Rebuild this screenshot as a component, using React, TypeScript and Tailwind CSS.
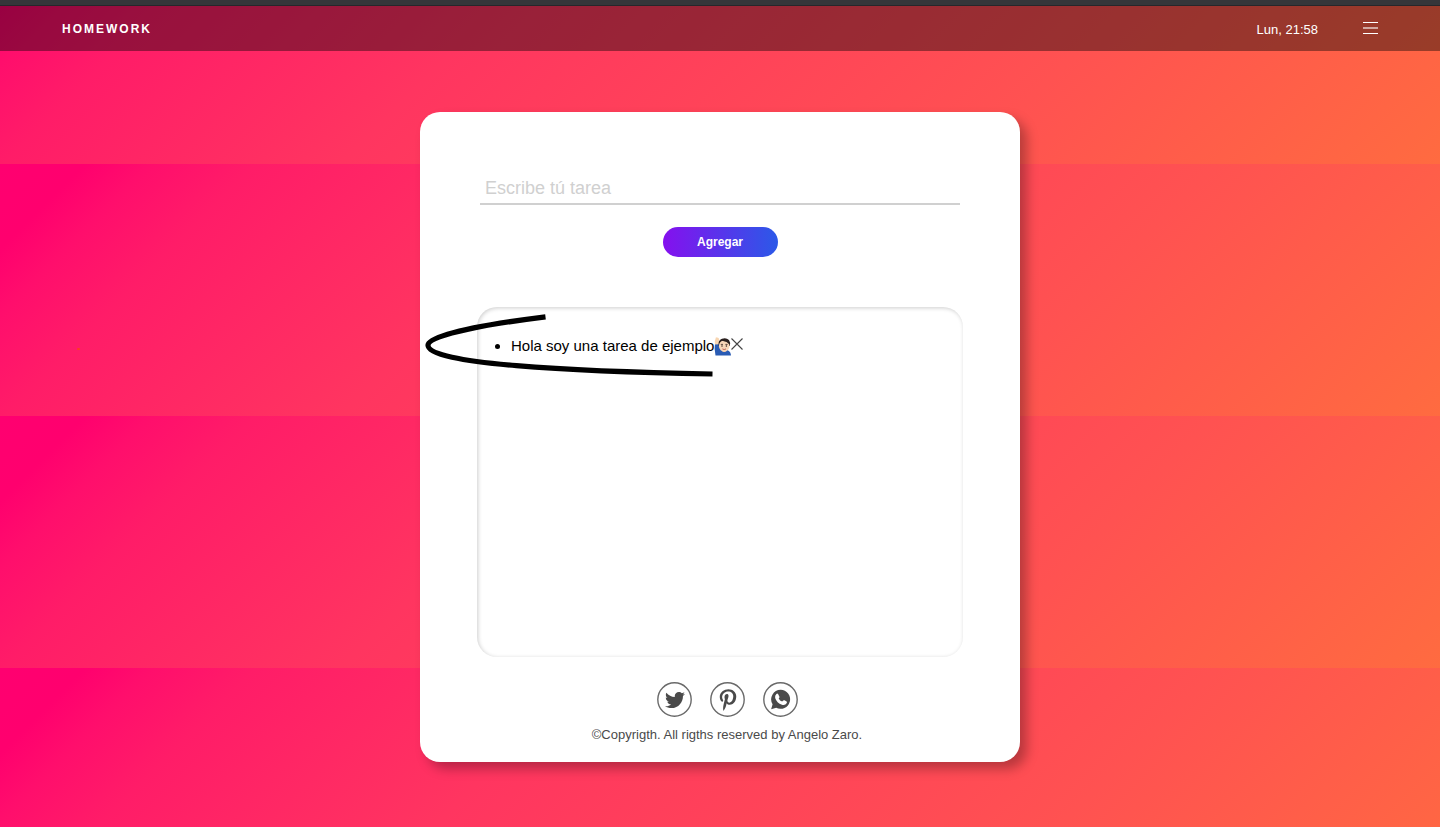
import { useState } from "react";
import type { ReactNode } from "react";
import { FaPinterestP, FaTwitter } from "react-icons/fa";

function MenuIcon() {
  return (
    <svg width="15" height="12" viewBox="0 0 15 12" aria-hidden="true">
      <path d="M0 0.5H15M0 11.5H15" stroke="#fff" strokeWidth="1" />
      <path d="M0 6H15" stroke="#fff" strokeOpacity="0.75" strokeWidth="1.5" />
    </svg>
  );
}

function RaisingHandIcon() {
  return (
    <svg width="18" height="19" viewBox="0 0 18 19" role="img" aria-label="Persona levantando la mano">
      <path d="M1 7 L6 6.5 L6 12 Q13 11.5 16 15 Q17 17 17 18.500 H1.5 Q0 12 1 7Z" fill="#2a5cb4" />
      <path d="M1 7.5 Q0 4 1.5 2 L1.8 0.6 Q2.5 0 3 0.8 Q4 0 4.4 1 Q5.6 1.6 5.2 3.6 L5 7.2Z" fill="#f8d5b0" />
      <path d="M8 11 H12.5 V14 Q10 16 8 14Z" fill="#e9bd98" />
      <path d="M4.6 9 Q3.8 3 8 1.8 Q12 0.2 15 3 Q16.6 5 15.8 9Z" fill="#2b211f" />
      <ellipse cx="10.2" cy="9" rx="5.3" ry="5.7" fill="#f8d7b8" />
      <path d="M5.2 7 Q5.6 3.2 9 4 Q13 4.4 15.3 7.2 Q15.6 2.2 10.4 2 Q4.8 2 5.2 7Z" fill="#2b211f" />
      <path d="M6.8 7.4 H9 M11.4 7.4 H13.6" stroke="#3a2a24" strokeWidth="0.8" />
      <circle cx="8" cy="8.9" r="0.75" fill="#35241f" />
      <circle cx="12.4" cy="8.9" r="0.75" fill="#35241f" />
      <path d="M8.4 11.9 Q10.2 13.2 12 11.9" stroke="#b5574d" strokeWidth="0.9" fill="none" />
    </svg>
  );
}

function CloseIcon() {
  return (
    <svg width="12" height="12" viewBox="0 0 12 12" aria-hidden="true">
      <path d="M0.5 0.5L11.5 11.5M11.5 0.5L0.5 11.5" stroke="#444" strokeWidth="1.1" />
    </svg>
  );
}

function WhatsappIcon() {
  return (
    <svg x="7" y="7" width="21" height="21" viewBox="0 0 22 22">
      <path
        d="M11.2 0.8A10 10 0 1 1 6.5 19.7L1.2 21.2L2.7 16A10 10 0 0 1 11.2 0.8Z"
        fill="#4a4a4a"
      />
      <path
        d="M6.7 5.2Q7.7 4.3 8.6 5.5L9.9 8Q10.1 8.9 9.1 9.9Q10.300 12.200 12.700 13.200L13.900 12Q14.5 11.500 15.200 11.900L17.400 13.100Q18 13.6 17.6 14.7Q16 17.6 12.5 16.6Q7.1 14.8 5.4 9.5Q4.900 6.800 6.7 5.2Z"
        fill="#fff"
      />
    </svg>
  );
}

function Badge({ children }: { children: ReactNode }) {
  return (
    <svg width="35" height="35" viewBox="0 0 35 35" aria-hidden="true">
      <circle cx="17.5" cy="17.5" r="16.7" fill="none" stroke="#6a6a6a" strokeWidth="1.4" />
      {children}
    </svg>
  );
}

const socials = [
  { name: "Twitter", href: "#twitter", icon: <FaTwitter size={20} x={8} y={8} /> },
  { name: "Pinterest", href: "#pinterest", icon: <FaPinterestP size={22} x={7} y={7} /> },
  { name: "WhatsApp", href: "#whatsapp", icon: <WhatsappIcon /> },
];

export default function App() {
  const [text, setText] = useState("");
  const [tasks, setTasks] = useState(["Hola soy una tarea de ejemplo"]);

  const addTask = () => {
    if (text.trim()) {
      setTasks([...tasks, text.trim()]);
      setText("");
    }
  };

  return (
    <div className="relative flex min-h-screen flex-col bg-[linear-gradient(135deg,#ff0070_0%,#ff006e_5%,#ff0e6c_9%,#ff1c68_15%,#ff3560_35%,#ff5251_72%,#ff6b40_100%)] bg-[length:100%_252px] bg-[position:0_-88px] font-['Liberation_Sans',Arial,sans-serif] text-black">
      <div className="h-[6px] border-b border-[#26272b] bg-[#35363a]" />
      <header className="flex h-[45px] items-center justify-between bg-black/40 px-[62px] text-white">
        <h1 className="text-xs font-bold tracking-[2px]">HOMEWORK</h1>
        <div className="flex items-center gap-[45px]">
          <time className="pt-[2px] text-[13px]">Lun, 21:58</time>
          <button type="button" aria-label="Menú" className="pb-[2px]">
            <MenuIcon />
          </button>
        </div>
      </header>
      <span className="absolute top-[348px] left-[77px] h-[2px] w-[3px] rounded-full bg-[#ff3b1f]" />

      <main className="mx-auto mt-[61px] mb-[65px] w-full max-w-[600px] rounded-[20px] bg-white px-[57px] pt-[60px] pb-[17px] shadow-[7px_7px_12px_rgba(0,0,0,0.28)]">
        <form
          className="flex flex-col items-center px-[3px]"
          onSubmit={(e) => {
            e.preventDefault();
            addTask();
          }}
        >
          <input
            type="text"
            aria-label="Tarea"
            placeholder="Escribe tú tarea"
            value={text}
            onChange={(e) => setText(e.target.value)}
            className="h-[33px] w-full border-b-2 border-[#d0d0d0] px-[5px] pt-[2px] text-lg outline-none placeholder:text-[#d0d0d0]"
          />
          <button
            type="submit"
            className="mt-[22px] h-[30px] w-[115px] rounded-full bg-[linear-gradient(to_right,#8510ee,#2b59e8)] text-xs font-bold text-white"
          >
            Agregar
          </button>
        </form>

        <section className="relative mt-[50px] min-h-[350px] rounded-[20px] pt-[29px] pl-[34px] shadow-[inset_1px_1px_4px_rgba(0,0,0,0.2)]">
          <ul className="list-disc text-[15px] leading-5">
            {tasks.map((task, i) => (
              <li key={i}>
                <span className="flex items-center">
                  {task}
                  <RaisingHandIcon />
                  <button
                    type="button"
                    aria-label="Eliminar tarea"
                    className="-ml-[1px] pb-1"
                    onClick={() => setTasks(tasks.filter((_, j) => j !== i))}
                  >
                    <CloseIcon />
                  </button>
                </span>
              </li>
            ))}
          </ul>
          <svg
            className="pointer-events-none absolute top-0 -left-[57px]"
            width="300"
            height="75"
            viewBox="0 0 300 75"
            fill="none"
            aria-hidden="true"
          >
            <path
              d="M125.5 9.8C76 16 8.500 27 8 38C7 57 150 64.5 292.5 67"
              stroke="#000"
              strokeWidth="5.2"
            />
          </svg>
        </section>

        <footer className="mt-[25px] flex flex-col items-center gap-2 pl-[14px] text-[#4a4a4a]">
          <nav className="flex gap-[18px]" aria-label="Redes sociales">
            {socials.map((s) => (
              <a key={s.name} href={s.href} aria-label={s.name}>
                <Badge>{s.icon}</Badge>
              </a>
            ))}
          </nav>
          <p className="text-[13px] leading-5">©Copyrigth. All rigths reserved by Angelo Zaro.</p>
        </footer>
      </main>
    </div>
  );
}
